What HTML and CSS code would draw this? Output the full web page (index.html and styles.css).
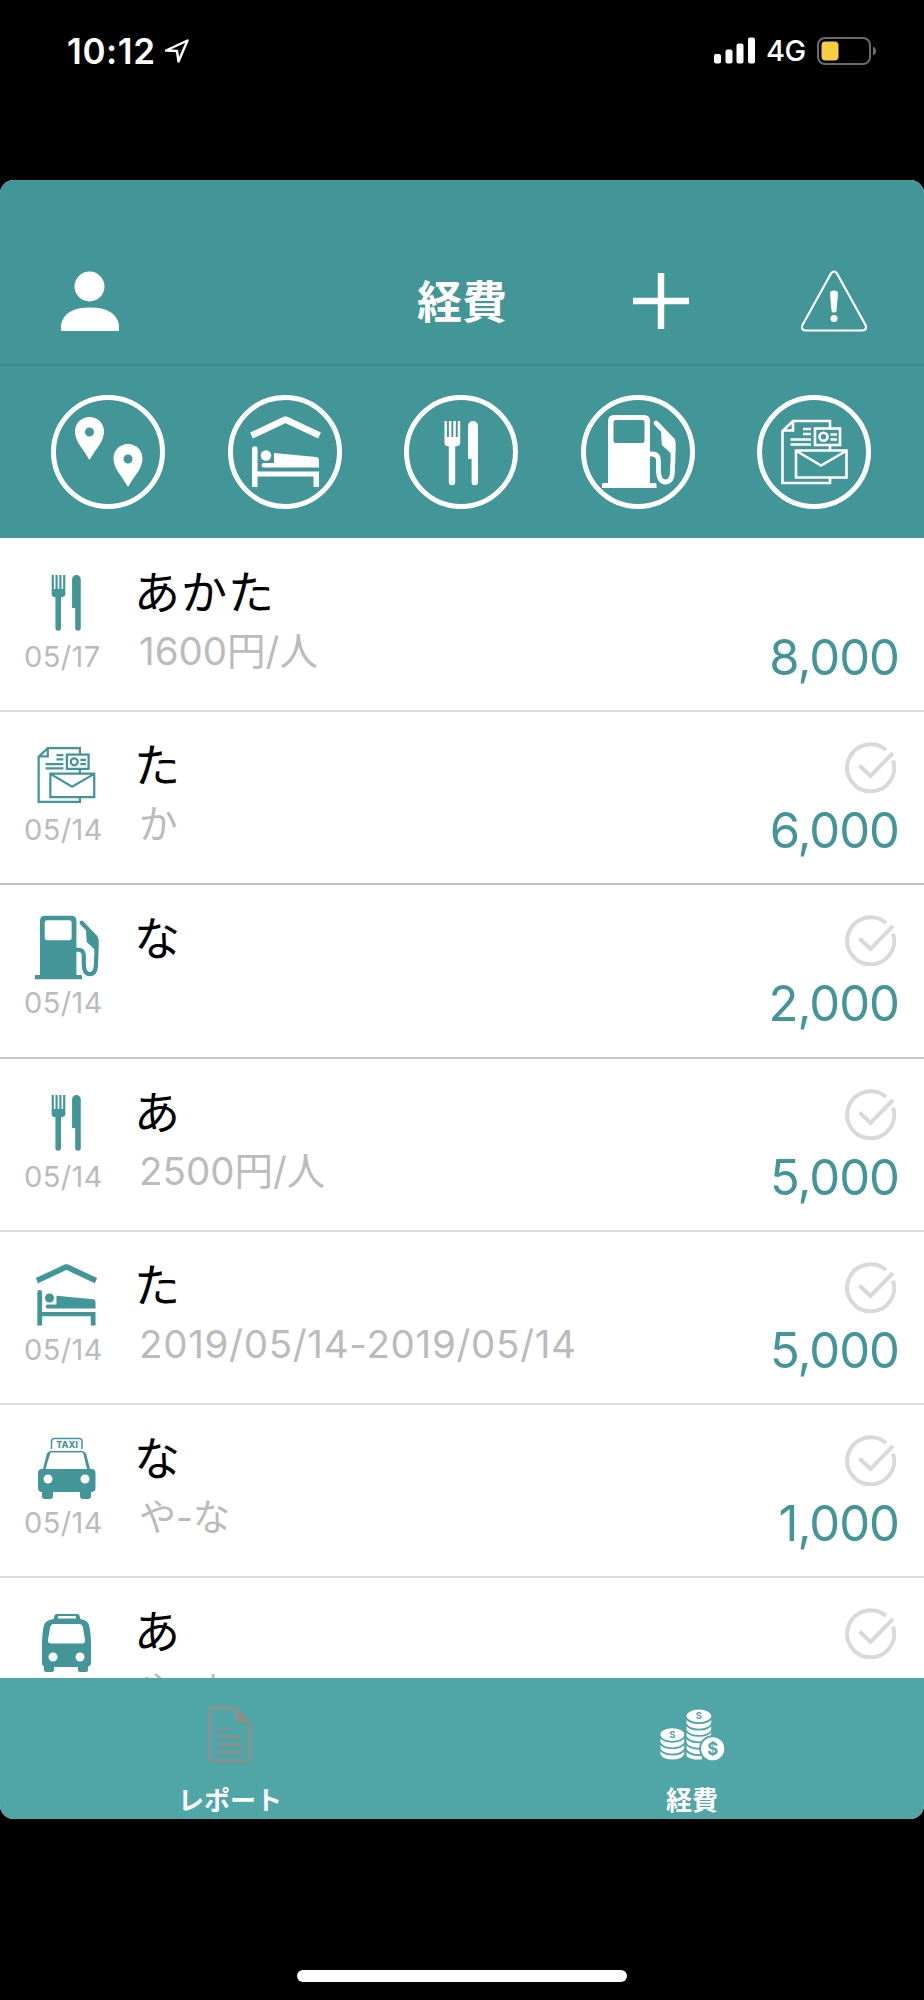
FILE: index.html
```
<!DOCTYPE html>
<html lang="ja">
<head>
    <meta charset="UTF-8">
    <meta name="viewport" content="width=device-width, initial-scale=1.0">
    <title>経費</title>
    <link rel="stylesheet" href="styles.css">
</head>
<body>
    <!-- アイコン定義 -->
    <svg class="icon-defs" width="0" height="0">
        <symbol id="icon-pins" viewBox="0 0 76 76">
            <path fill="currentColor" fill-rule="evenodd" d="M19.500 3C11 3 5 9.500 5 17.500c0 10 8 17 14.500 28.500C26 34.500 34 27.500 34 17.500 34 9.500 28 3 19.500 3zm0 10.500a4.500 4.500 0 1 1 0 9 4.500 4.500 0 0 1 0-9z"/>
            <path fill="currentColor" fill-rule="evenodd" transform="translate(38.500 27)" d="M19.500 3C11 3 5 9.500 5 17.500c0 10 8 17 14.500 28.500C26 34.500 34 27.500 34 17.500 34 9.500 28 3 19.500 3zm0 10.500a4.500 4.500 0 1 1 0 9 4.500 4.500 0 0 1 0-9z"/>
        </symbol>
        <symbol id="icon-hotel" viewBox="0 0 76 76">
            <path fill="none" stroke="currentColor" stroke-width="6.500" stroke-linejoin="bevel" d="M4.500 21.500L38.500 5.500 72.500 21.500"/>
            <g fill="currentColor">
                <path d="M5 35a2.700 2.700 0 0 1 5.500 0v22.500H72V73h-5.500V62.500h-56V73H5z"/>
                <circle cx="19" cy="41.500" r="5.200"/>
                <path d="M27 39l42 4q3 .4 3 3.500V53.500H16.500q-2-.2-2-2.200t2-2.300H27z"/>
            </g>
        </symbol>
        <symbol id="icon-meal" viewBox="0 0 76 76">
            <g fill="currentColor">
                <path d="M21.500 7h2.500v16h1.900V7h2.500v16h1.900V7h2.500v16h1.900V7h2.500v22q0 3-5 3.500V68a3.200 3.200 0 0 1-6.400 0V32.500q-4.300-.5-4.300-3.500z"/>
                <path d="M45 12a5 5 0 0 1 10 0v56a3.200 3.200 0 0 1-6.400 0V45H45z"/>
            </g>
        </symbol>
        <symbol id="icon-gas" viewBox="0 0 76 76">
            <path fill="currentColor" fill-rule="evenodd" d="M8 7q0-6 6-6h30q6 0 6 6v62h5q1.500 0 1.500 1.500V74H2v-3.500Q2 69 3.500 69H8zM16 6q-2.500 0-2.500 2.500v18Q13.500 29 16 29h26q2.500 0 2.500-2.500v-18Q44.500 6 42 6z"/>
            <path fill="none" stroke="currentColor" stroke-width="4.800" stroke-linecap="round" d="M50 40h2q6.500 0 6.500 7v9q0 12 7 12T72.500 56q0-5 .5-9.500V29L69 22.500 56 9"/>
            <path fill="currentColor" d="M61 14l12 9q2.400 2 2.400 6v10l-4 1-9.500-9-.5-7z"/>
        </symbol>
        <symbol id="icon-other" viewBox="0 0 76 76">
            <g fill="none" stroke="currentColor" stroke-width="2.600">
                <path d="M54 14.500V7H17L6.500 17v52H54v-6M17 7v9.500H6.500M27 15h8M27 20h8M14.500 25.500H35M14.500 30.500H35M54 31v5.500"/>
                <rect x="39" y="14.500" width="25" height="16.500"/>
                <circle cx="47.500" cy="22.800" r="4"/>
                <path d="M54.500 20.500h6.500M54.500 25.500h6.500"/>
                <path d="M20 36.500h50.500V63.500H20zM20.500 37L45 51.500 70 37"/>
            </g>
        </symbol>
        <symbol id="icon-taxi" viewBox="0 0 66 66">
            <path fill="none" stroke="currentColor" stroke-width="1.500" d="M18.500 14V6.500q0-3 3-3H46q3 0 3 3V14"/>
            <text x="34" y="13.300" text-anchor="middle" class="taxi-text">TAXI</text>
            <path fill="currentColor" fill-rule="evenodd" d="M18.500 16H48.500q4 0 5 4l3.500 14h1.500q4 0 4 4v15q0 4-4.500 4v4q0 3-3 3h-5q-3 0-3-3v-4H20v4q0 3-3 3h-5q-3 0-3-3v-4q-4 0-4-4V38q0-4 4-4h1L13.500 20q1-4 5-4zM17.500 17.500L12.500 34H54L50 17.500zM15 39.500a4.500 4.500 0 1 0 0 9 4.500 4.500 0 0 0 0-9zm37 0a4.500 4.500 0 1 0 0 9 4.500 4.500 0 0 0 0-9z"/>
        </symbol>
        <symbol id="icon-bus" viewBox="0 0 66 66">
            <path fill="currentColor" fill-rule="evenodd" d="M23.500 6h21q1.500 0 2 1.500L47.500 11q8 1 9 8 1.500 8 1.500 16v19q0 4-3 4.500V62q0 2-2 2h-6q-2 0-2-2v-3H21v3q0 2-2 2h-6q-2 0-2-2v-3.500q-2-.5-2-4.500V35q0-8 1.500-16 1-7 10-8l1-3.500Q22 6 23.500 6zM25 8v2.500h18V8zM21 16q-3.500 0-4 4l-2 12q-.3 3.500 3 3.500h31q3.300 0 3-3.500l-2-12q-.5-4-4-4zM20 44.500a4.500 4.500 0 1 0 0 9 4.500 4.500 0 0 0 0-9zm27 0a4.500 4.500 0 1 0 0 9 4.500 4.500 0 0 0 0-9z"/>
        </symbol>
        <symbol id="icon-check" viewBox="0 0 52 52">
            <g fill="none" stroke="currentColor" stroke-width="4">
                <path d="M42 9A23.500 23.500 0 1 0 49 19.500"/>
                <path d="M15.500 24.500L26.500 35 49 12"/>
            </g>
        </symbol>
    </svg>

    <!-- ステータスバー -->
    <div class="status-bar">
        <div class="status-left">
            <span class="clock">10:12</span>
            <svg width="26" height="26" viewBox="0 0 26 26"><path fill="none" stroke="#fff" stroke-width="2.400" stroke-linejoin="round" d="M2 12.500L23.500 2.500 14.500 23.500 13 13z"/></svg>
        </div>
        <div class="status-right">
            <svg width="42" height="27" viewBox="0 0 42 27" fill="#fff">
                <rect x="0" y="17" width="7" height="9.500" rx="2"/>
                <rect x="11.500" y="12.500" width="7" height="14" rx="2"/>
                <rect x="22.500" y="6.500" width="7" height="20" rx="2"/>
                <rect x="34" y="0.500" width="7" height="26" rx="2"/>
            </svg>
            <span class="network">4G</span>
            <svg width="60" height="28" viewBox="0 0 60 28">
                <rect x="1" y="1" width="52" height="26" rx="7" fill="none" stroke="#6b6b6b" stroke-width="2"/>
                <rect x="4.500" y="4.500" width="17" height="19" rx="4" fill="#f7cd46"/>
                <path d="M56 9.500q3 1.500 3 4.500t-3 4.500z" fill="#6b6b6b"/>
            </svg>
        </div>
    </div>

    <!-- アプリ本体 -->
    <div class="app">
        <header class="nav-bar">
            <svg width="60" height="60" viewBox="0 0 60 60" fill="#fff">
                <circle cx="29.500" cy="15.500" r="15"/>
                <path d="M1 60v-6q3-17.500 29-17.500T59 54v6z"/>
            </svg>
            <h1 class="nav-title">経費</h1>
            <svg width="56" height="56" viewBox="0 0 56 56"><path d="M28 0v56M0 28h56" stroke="#fff" stroke-width="6.500"/></svg>
            <svg width="68" height="62" viewBox="0 0 68 62">
                <path fill="none" stroke="#fff" stroke-width="2.200" stroke-linejoin="round" d="M31 3.500q3-4 6 0L65.500 55q2 5-3 5.500h-57q-5-.5-3-5.500z"/>
                <path fill="#fff" d="M30 23q0-2.500 4-2.500t4 2.500l-1.500 18q-.3 1.500-2.500 1.500T31.500 41z"/>
                <circle cx="34" cy="48.500" r="3.500" fill="#fff"/>
            </svg>
        </header>

        <!-- カテゴリ -->
        <nav class="categories">
            <a class="category"><svg><use href="#icon-pins"/></svg></a>
            <a class="category"><svg><use href="#icon-hotel"/></svg></a>
            <a class="category"><svg><use href="#icon-meal"/></svg></a>
            <a class="category"><svg><use href="#icon-gas"/></svg></a>
            <a class="category"><svg><use href="#icon-other"/></svg></a>
        </nav>

        <!-- 経費一覧 -->
        <ul class="expenses">
            <li class="expense">
                <div class="kind"><svg><use href="#icon-meal"/></svg><span class="date">05/17</span></div>
                <div class="detail"><p class="name">あかた</p><p class="note">1600円/人</p></div>
                <div class="total"><span class="amount">8,000</span></div>
            </li>
            <li class="expense dark">
                <div class="kind"><svg><use href="#icon-other"/></svg><span class="date">05/14</span></div>
                <div class="detail"><p class="name">た</p><p class="note">か</p></div>
                <div class="total"><svg><use href="#icon-check"/></svg><span class="amount">6,000</span></div>
            </li>
            <li class="expense dark">
                <div class="kind"><svg><use href="#icon-gas"/></svg><span class="date">05/14</span></div>
                <div class="detail"><p class="name">な</p></div>
                <div class="total"><svg><use href="#icon-check"/></svg><span class="amount">2,000</span></div>
            </li>
            <li class="expense">
                <div class="kind"><svg><use href="#icon-meal"/></svg><span class="date">05/14</span></div>
                <div class="detail"><p class="name">あ</p><p class="note">2500円/人</p></div>
                <div class="total"><svg><use href="#icon-check"/></svg><span class="amount">5,000</span></div>
            </li>
            <li class="expense">
                <div class="kind"><svg><use href="#icon-hotel"/></svg><span class="date">05/14</span></div>
                <div class="detail"><p class="name">た</p><p class="note period">2019/05/14-2019/05/14</p></div>
                <div class="total"><svg><use href="#icon-check"/></svg><span class="amount">5,000</span></div>
            </li>
            <li class="expense">
                <div class="kind"><svg><use href="#icon-taxi"/></svg><span class="date">05/14</span></div>
                <div class="detail"><p class="name">な</p><p class="note route">や-な</p></div>
                <div class="total"><svg><use href="#icon-check"/></svg><span class="amount">1,000</span></div>
            </li>
            <li class="expense">
                <div class="kind"><svg><use href="#icon-bus"/></svg></div>
                <div class="detail"><p class="name">あ</p><p class="note route">や-ぬ</p></div>
                <div class="total"><svg><use href="#icon-check"/></svg><span class="amount">3,000</span></div>
            </li>
        </ul>

        <!-- タブバー -->
        <footer class="tab-bar">
            <a class="tab">
                <svg width="68" height="60" viewBox="0 0 68 60">
                    <path fill="none" stroke="#849290" stroke-width="3.400" d="M16 3H38L53.500 18V53q0 4-4 4h-33q-4 0-4-4V7q0-4 3.500-4z"/>
                    <path fill="#849290" d="M38 2l16 16H42q-4 0-4-4z"/>
                    <path stroke="#849290" stroke-width="3.400" d="M20.500 24.500h12M20.500 32.500h25M20.500 40.500h25M20.500 48.500h25"/>
                </svg>
                <span>レポート</span>
            </a>
            <a class="tab">
                <svg width="68" height="60" viewBox="0 0 68 60">
                    <g fill="#fff">
                        <path d="M27.500 11v41q4 3.500 12.500 3.500h2.500L52.500 30V11z"/>
                        <path d="M1 30v20q3 5.500 12 5.500T25 50V30z"/>
                        <ellipse cx="40" cy="11" rx="12.500" ry="6.300"/>
                        <ellipse cx="13" cy="30" rx="12" ry="6.300"/>
                    </g>
                    <g fill="none" stroke="#50a6a7" stroke-width="1.800">
                        <path d="M26.500 12.500q3.500 6 13.500 6t13.500-6M26.500 19q3.500 6 13.500 6t13.500-6M26.500 25.500q3.500 6 13.500 6t13.500-6M26.500 32q3.500 6 13.500 6t13.500-6M26.500 38.500q3.500 6 13.500 6t13.500-6M26.500 45q3.500 6 13.500 6t13.500-6"/>
                        <path d="M0 31.500q3 6 13 6t13-6M0 38q3 6 13 6t13-6M0 44.500q3 6 13 6t13-6"/>
                    </g>
                    <circle cx="54" cy="44.500" r="13.800" fill="#50a6a7"/>
                    <circle cx="54" cy="44.500" r="11.800" fill="#fff"/>
                    <g class="coin-text">
                        <text x="54" y="50.500" font-size="17">$</text>
                        <text x="40" y="14.200" font-size="9.500">S</text>
                        <text x="13" y="33.500" font-size="9.500">S</text>
                    </g>
                </svg>
                <span>経費</span>
            </a>
        </footer>
    </div>

    <div class="home-indicator"></div>
</body>
</html>
```
FILE: styles.css
```
* {
    box-sizing: border-box;
}

body {
    margin: 0;
    width: 924px;
    height: 2000px;
    background-color: #000;
    font-family: Inter, "Noto Sans CJK JP", sans-serif;
    display: flex;
    flex-direction: column;
    overflow: hidden;
}

.icon-defs {
    position: absolute;
}

/* ステータスバー */
.status-bar {
    height: 180px;
    padding: 36px 47px 0 67px;
    display: flex;
    justify-content: space-between;
    align-items: flex-start;
    color: #fff;
}

.status-left,
.status-right {
    display: flex;
    align-items: center;
    height: 29px;
}

.status-left {
    gap: 8px;
}

.clock {
    font-size: 35px;
    line-height: 40px;
    font-weight: 600;
    letter-spacing: 0.6px;
}

.network {
    font-size: 29px;
    line-height: 36px;
    font-weight: 500;
    width: 40px;
    margin: 1px 11px 0 10px;
    letter-spacing: -0.5px;
}

/* アプリ本体 */
.app {
    height: 1639px;
    border-radius: 14px;
    overflow: hidden;
    background-color: #fff;
    display: flex;
    flex-direction: column;
}

.nav-bar {
    height: 186px;
    padding: 57px 55px 0 60px;
    background-color: #429698;
    border-bottom: 2px solid #3c8a8d;
    display: flex;
    align-items: center;
}

.nav-title {
    margin: 5px 126px 0 297px;
    color: #fff;
    font-size: 45px;
    line-height: 60px;
    font-weight: 700;
}

.nav-bar svg:last-child {
    margin-left: 111px;
}

.categories {
    height: 172px;
    padding: 0 53px 0 51px;
    background-color: #429698;
    display: flex;
    justify-content: space-between;
    align-items: center;
}

.category {
    width: 114px;
    height: 114px;
    border: 5px solid #fff;
    border-radius: 50%;
    color: #fff;
    display: flex;
    justify-content: center;
    align-items: center;
}

.category svg {
    width: 76px;
    height: 76px;
}

/* 経費一覧 */
.expenses {
    height: 1140px;
    margin: 0;
    padding: 1px 0 0;
    list-style: none;
    overflow: hidden;
}

.expense {
    height: 173.2px;
    padding: 0 25px 0 24px;
    border-bottom: 2px solid #dedede;
    display: flex;
}

.expense.dark {
    border-bottom-color: #c4c4c4;
}

.kind {
    width: 110px;
    padding-top: 30px;
    color: #429698;
}

.kind svg {
    display: block;
    width: 66px;
    height: 66px;
    margin-left: 9px;
}

.date {
    display: block;
    margin-top: 2px;
    font-size: 29px;
    line-height: 40px;
    letter-spacing: 0.4px;
    color: #bbb;
}

.detail {
    flex: 1;
    padding-top: 23px;
}

.detail p {
    margin: 0;
    white-space: nowrap;
}

.name {
    font-size: 46px;
    line-height: 60px;
    letter-spacing: 1px;
    color: #000;
}

.note {
    padding: 3px 0 0 5px;
    font-size: 38.5px;
    line-height: 52px;
    color: #bbb;
}

.note.period {
    letter-spacing: 0.7px;
}

.note.route {
    padding-top: 4px;
    font-size: 37px;
}

.total {
    padding-top: 29px;
    display: flex;
    flex-direction: column;
    justify-content: flex-end;
    align-items: flex-end;
    height: 149px;
}

.total svg {
    width: 52px;
    height: 52px;
    margin: 0 3px 8px 0;
    color: #d9d9d9;
}

.amount {
    font-size: 49px;
    line-height: 60px;
    letter-spacing: -1px;
    color: #429698;
}

.taxi-text {
    font: 800 9px Inter, sans-serif;
    fill: currentColor;
}

/* タブバー */
.tab-bar {
    height: 141px;
    background-color: #50a6a7;
    display: flex;
}

.tab {
    flex: 1;
    padding-top: 27px;
    display: flex;
    flex-direction: column;
    align-items: center;
    color: #fff;
    font-size: 26px;
    font-weight: 700;
    line-height: 36px;
}

.tab span {
    margin: 19px 2px 0 0;
}

.coin-text {
    font-family: Inter, sans-serif;
    font-weight: 700;
    fill: #50a6a7;
    text-anchor: middle;
}

.home-indicator {
    width: 330px;
    height: 12px;
    margin: 151px auto 0;
    border-radius: 6px;
    background-color: #fff;
}
```
